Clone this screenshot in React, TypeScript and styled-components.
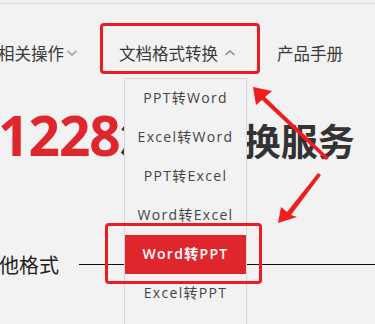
import { FunctionComponent } from 'react';
import styled, { createGlobalStyle } from 'styled-components';

const GlobalStyle = createGlobalStyle`
  html, body {
    margin: 0;
    padding: 0;
    background: #f2f2f2;
  }
  body {
    font-family: 'Open Sans', 'Noto Sans CJK SC', sans-serif;
    color: #333;
  }
`;

const StyledPage = styled.div`
  position: relative;
  width: 375px;
  height: 324px;
  overflow: hidden;
  background: #f2f2f2;
  border-top: 1px solid transparent;
`;

const StyledTopRule = styled.div`
  margin-top: 2px;
  height: 1px;
  background: #dcdcdc;
`;

const StyledNav = styled.nav`
  display: flex;
  align-items: center;
  gap: 41px;
  height: 48px;
  margin: 25px 0 0 -2px;
  font-family: 'Noto Sans CJK SC', sans-serif;
  font-size: 16.5px;
  color: #3a3a3a;
  white-space: nowrap;
`;

const StyledNavItem = styled.span<{ $gap?: number }>`
  display: inline-flex;
  align-items: center;
  gap: ${(p) => p.$gap ?? 4}px;
`;

const StyledChevron = styled.svg<{ $color?: string }>`
  width: 12px;
  height: 8px;
  fill: none;
  stroke: ${(p) => p.$color || '#999'};
  stroke-width: 1.4;
`;

const StyledHeadline = styled.h1`
  display: flex;
  align-items: baseline;
  margin: 30px 0 0 -2px;
  font-weight: 700;
  line-height: 1;
  white-space: nowrap;
  color: #333;
`;

const StyledCount = styled.span`
  font-size: 55px;
  color: #e0262d;
  letter-spacing: -1px;
`;

const StyledWords = styled.span<{ $gap?: number }>`
  font-family: 'Noto Sans CJK SC', sans-serif;
  font-size: 37px;
  margin-left: ${(p) => p.$gap || 0}px;
`;

const StyledSection = styled.div`
  display: flex;
  align-items: center;
  gap: 20px;
  margin: 88px 0 0 -21px;
`;

const StyledSectionLabel = styled.span`
  font-family: 'Noto Sans CJK SC', sans-serif;
  font-size: 20px;
  color: #222;
  white-space: nowrap;
`;

const StyledSectionLine = styled.div`
  flex: 1;
  height: 1px;
  background: #111;
`;

const StyledMenu = styled.ul`
  position: absolute;
  left: 124px;
  top: 77px;
  width: 121px;
  height: 260px;
  margin: 0;
  padding: 0;
  list-style: none;
  background: #f2f2f2;
  border: 1px solid #d6d6d6;
`;

const StyledMenuItem = styled.li<{ $active?: boolean }>`
  display: flex;
  align-items: center;
  justify-content: center;
  box-sizing: border-box;
  height: 39px;
  padding-bottom: 3px;
  font-size: 14px;
  letter-spacing: 1.3px;
  color: ${(p) => (p.$active ? '#fff' : '#444')};
  background: ${(p) => (p.$active ? '#e0262d' : 'transparent')};
  font-weight: ${(p) => (p.$active ? 600 : 400)};
`;

const StyledMark = styled.div<{ $x: number; $y: number; $w: number; $h: number }>`
  position: absolute;
  left: ${(p) => p.$x}px;
  top: ${(p) => p.$y}px;
  width: ${(p) => p.$w}px;
  height: ${(p) => p.$h}px;
  box-sizing: border-box;
  border: 3px solid #ec1c24;
  border-radius: 4px;
  pointer-events: none;
`;

const StyledArrows = styled.svg`
  position: absolute;
  left: 0;
  top: 0;
  width: 375px;
  height: 324px;
  pointer-events: none;
`;

const items = ['PPT转Word', 'Excel转Word', 'PPT转Excel', 'Word转Excel', 'Word转PPT', 'Excel转PPT'];

const Down = () => (
  <StyledChevron viewBox="0 0 12 8">
    <path d="M1.5 2 L6 6 L10.5 2" />
  </StyledChevron>
);

const Up = () => (
  <StyledChevron viewBox="0 0 12 8" $color="#888">
    <path d="M1.5 6 L6 2 L10.5 6" />
  </StyledChevron>
);

const App: FunctionComponent = () => {
  return (
    <StyledPage>
      <GlobalStyle />
      <StyledTopRule />
      <StyledNav>
        <StyledNavItem $gap={2}>
          相关操作
          <Down />
        </StyledNavItem>
        <StyledNavItem $gap={6}>
          文档格式转换
          <Up />
        </StyledNavItem>
        <StyledNavItem>产品手册</StyledNavItem>
      </StyledNav>
      <StyledHeadline>
        <StyledCount>1228</StyledCount>
        <StyledWords>次文档</StyledWords>
        <StyledWords $gap={13}>换服务</StyledWords>
      </StyledHeadline>
      <StyledSection>
        <StyledSectionLabel>其他格式</StyledSectionLabel>
        <StyledSectionLine />
      </StyledSection>

      <StyledMenu>
        {items.map((label) => (
          <StyledMenuItem key={label} $active={label === 'Word转PPT'}>
            {label}
          </StyledMenuItem>
        ))}
      </StyledMenu>

      <StyledMark $x={100} $y={22} $w={160} $h={51} />
      <StyledMark $x={105} $y={222} $w={157} $h={61} />

      <StyledArrows viewBox="0 0 375 324">
        <polygon fill="#f01d1d" points="253,86 272,90 265,96 329,157 326,159 262,99 256,104" />
        <polygon fill="#f01d1d" points="278,222 281,206 287,211 318,172 321,174 291,214 297,216" />
      </StyledArrows>
    </StyledPage>
  );
};

export default App;
